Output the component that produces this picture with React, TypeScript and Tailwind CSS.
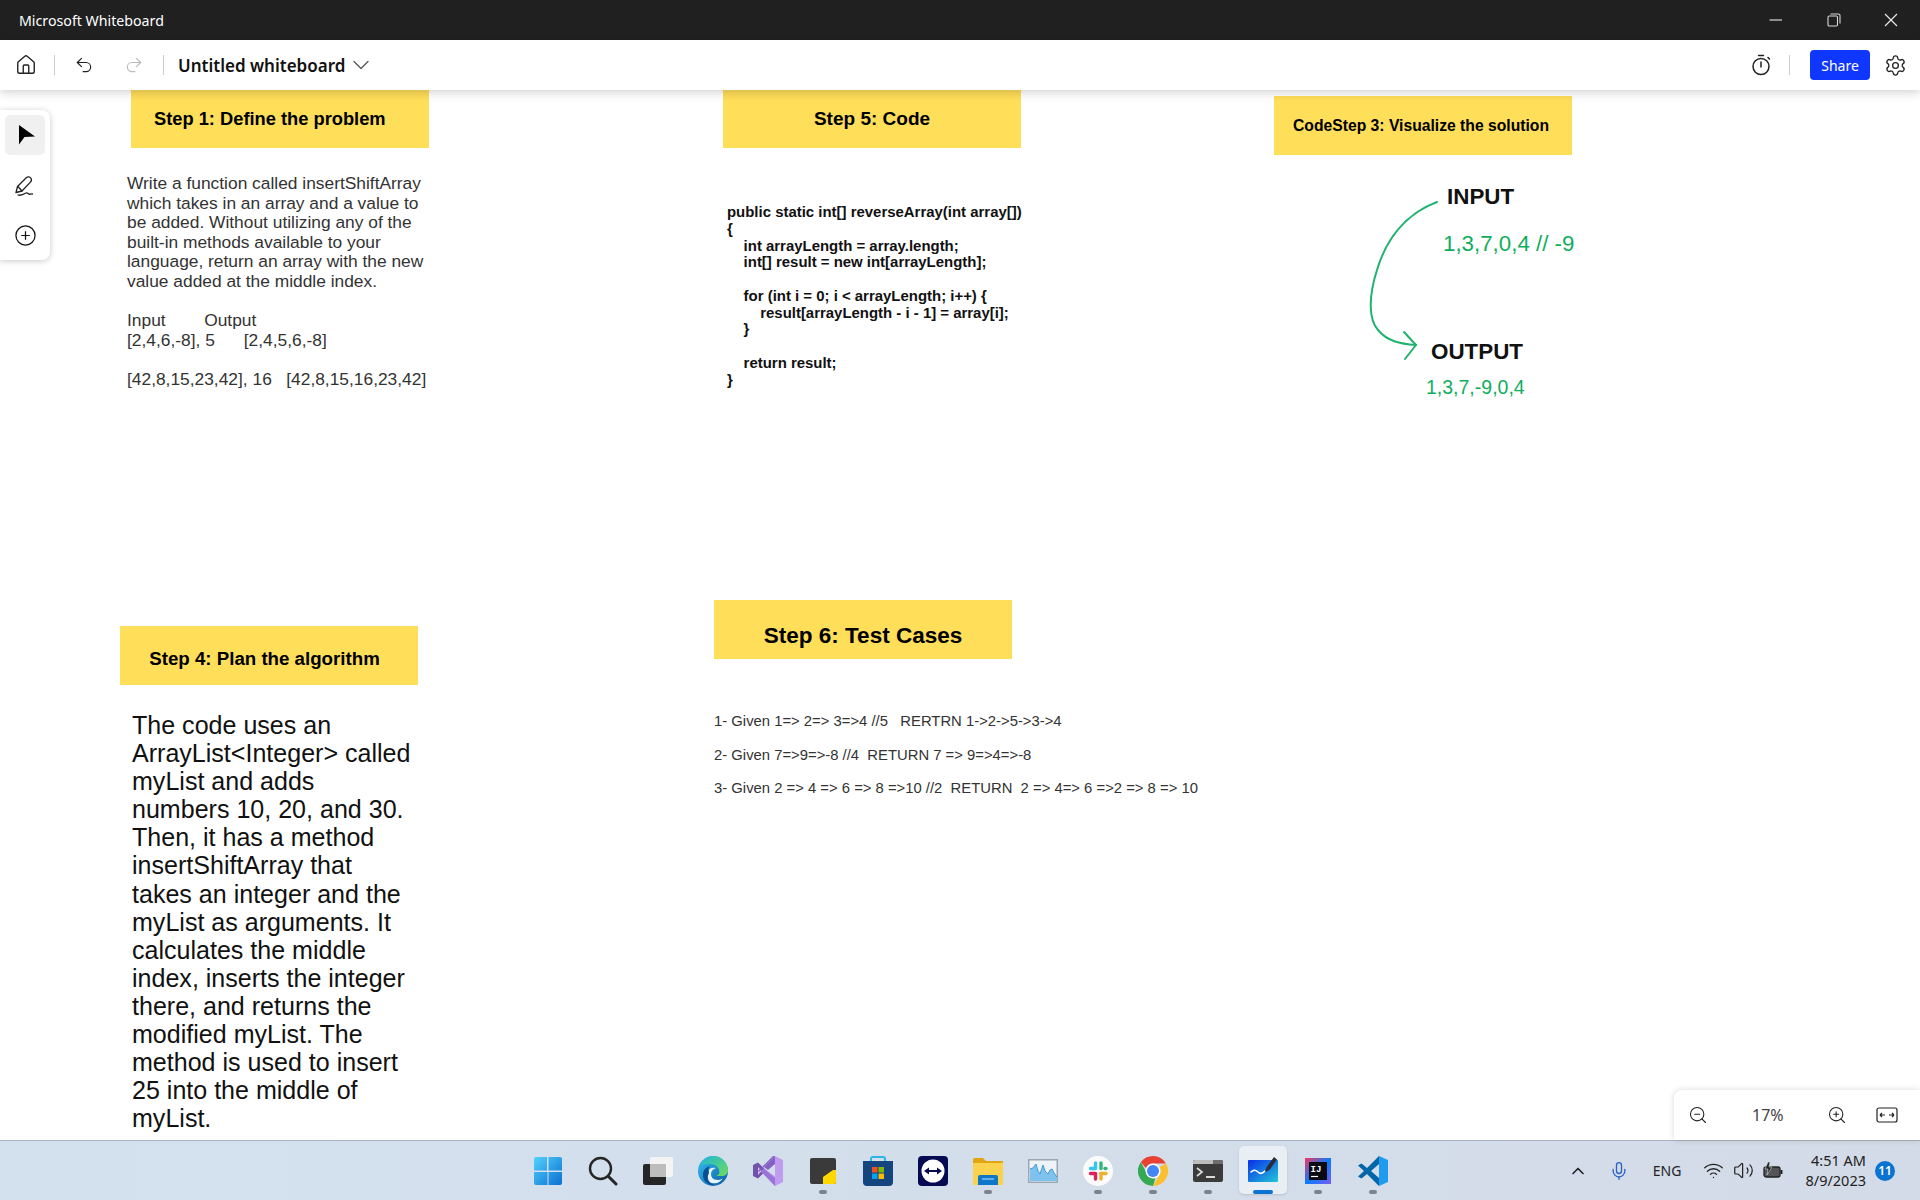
import React, { ReactNode } from 'react';
import { ChevronDown, ChevronUp, CirclePlus, Home, Mic, Redo2, Settings, Undo2, Volume2, Wifi, ZoomIn, ZoomOut } from 'lucide-react';

const arial = 'font-["Liberation_Sans",Arial,sans-serif]';
const segoe = 'font-["Noto_Sans",sans-serif]';

function Timer() {
  return (
    <svg width="20" height="22" viewBox="0 0 20 22" fill="none" stroke="#222" strokeWidth="1.5" strokeLinecap="round">
      <circle cx="10" cy="12.5" r="8" />
      <path d="M10 8v5M7.5 1.5h5M17 3.5l1.5 1.5" />
    </svg>
  );
}

function Cursor() {
  return (
    <svg width="18" height="22" viewBox="0 0 18 22">
      <path d="M1 1l16 11.500-10.500.5L1 20.500z" fill="#000" />
    </svg>
  );
}

function Pen() {
  return (
    <svg width="22" height="22" viewBox="0 0 22 22" fill="none" stroke="#222" strokeWidth="1.3" strokeLinecap="round" strokeLinejoin="round">
      <path d="M2 17.5l1.5-6L12.5 2.5c1.4-1.2 3.4-.8 4.3.5.9 1.3.7 3-.4 4.1L8 16l-6 1.5z" />
      <path d="M4 11.5l4 4.5" />
      <path d="M4 20c3 1 5.5-.5 8-2 1.5-.9 2 .9 3 1.2 1.2.3 2-.4 3.5-.2" />
    </svg>
  );
}

function WindowButtons() {
  return (
    <div className="flex items-center text-white">
      <svg width="14" height="14" viewBox="0 0 14 14" className="mr-[44px]">
        <path d="M0.5 7h12.5" stroke="#bdbdbd" strokeWidth="1.4" />
      </svg>
      <svg width="14" height="14" viewBox="0 0 14 14" fill="none" stroke="#d8d8d8" strokeWidth="1.1" className="mr-[43px]">
        <rect x="1" y="3" width="9.5" height="10" rx="1.2" />
        <path d="M3.5 1h8a1.5 1.5 0 0 1 1.5 1.5v8" />
      </svg>
      <svg width="14" height="14" viewBox="0 0 14 14" stroke="#e8e8e8" strokeWidth="1.2" className="mr-[22px]">
        <path d="M1 1l12 12M13 1L1 13" />
      </svg>
    </div>
  );
}

function Note({ className, children }: { className: string; children: ReactNode }) {
  return (
    <div className={`absolute flex h-[58px] w-[298px] items-center bg-[#ffde59] text-black font-bold ${arial} ${className}`}>
      {children}
    </div>
  );
}

function WindowsLogo() {
  return (
    <svg width="30" height="30" viewBox="0 0 30 30">
      <defs>
        <linearGradient id="win" x1="0" y1="0" x2="1" y2="1">
          <stop offset="0" stopColor="#52d2fb" />
          <stop offset="1" stopColor="#0b6fd1" />
        </linearGradient>
      </defs>
      <path d="M1 3a2 2 0 0 1 2-2h11v13.5H1zM15.5 1H27a2 2 0 0 1 2 2v11.5H15.5zM1 16h13.5v13H3a2 2 0 0 1-2-2zM15.5 16H29v11a2 2 0 0 1-2 2H15.5z" fill="url(#win)" />
    </svg>
  );
}

function SearchGlyph() {
  return (
    <svg width="30" height="30" viewBox="0 0 30 30" fill="none" stroke="#262626" strokeWidth="2.4" strokeLinecap="round">
      <circle cx="12.5" cy="12.5" r="10.5" />
      <path d="M20.5 20.5l7.5 7.5" strokeWidth="3" />
    </svg>
  );
}

function TaskView() {
  return (
    <svg width="30" height="30" viewBox="0 0 30 30">
      <rect x="0" y="8" width="23" height="21" rx="2" fill="#262626" />
      <rect x="7" y="1" width="23" height="20" rx="2" fill="#f4f4f4" />
      <rect x="7" y="8" width="16" height="13" fill="#bdbdbd" />
    </svg>
  );
}

function Edge() {
  return (
    <svg width="30" height="30" viewBox="0 0 30 30">
      <defs>
        <linearGradient id="edgeA" x1="0" y1="0" x2="1" y2="1">
          <stop offset="0" stopColor="#35c1f1" />
          <stop offset="1" stopColor="#0c59a4" />
        </linearGradient>
        <linearGradient id="edgeB" x1="0" y1="0" x2="1" y2="1">
          <stop offset="0" stopColor="#1fb7d8" />
          <stop offset="1" stopColor="#6fdc5a" />
        </linearGradient>
      </defs>
      <circle cx="15" cy="15" r="15" fill="url(#edgeA)" />
      <path d="M3 9C6 2 12 0 15 0c9 0 15 7 15 14 0 4-3 6-6 6h-6c3-1 4-3 3-6-1-4-5-6-9-6-4 0-7 1-9 1z" fill="url(#edgeB)" />
      <path d="M14 27c-5-1-7-6-5-11 2-4 6-5 9-4-3 1-5 3-5 6 0 3 2 6 7 6 2 0 4-1 5-2-2 4-6 6-11 5z" fill="#e6f4fb" />
      <path d="M11 17c-3 5 0 11 6 12-7 1-12-4-12-10 0-5 3-8 7-9-2 2-1 5-1 7z" fill="#0a4f92" />
    </svg>
  );
}

function VisualStudio() {
  return (
    <svg width="30" height="30" viewBox="0 0 30 30">
      <path d="M0 9l5-2.5 8 8-8 8L0 20z" fill="#7252aa" />
      <path d="M5 11v8l3.5-4z" fill="#d8c5f5" />
      <path d="M22 0l8 4v22l-8 4-14-14.5 3-3 11 8z" fill="#c09cf0" />
      <path d="M22 0L6 16l-1-1L20 0z" fill="#8661c5" />
      <path d="M22 0v8l-7 6-4-3z" fill="#8661c5" />
      <path d="M8 15.5l14 14.5v-8l-11-9.5z" fill="#9a74d8" />
    </svg>
  );
}

function Sticky() {
  return (
    <svg width="28" height="28" viewBox="0 0 28 28">
      <rect x="1" y="1" width="26" height="26" rx="2" fill="#3a3a3a" />
      <path d="M14 27V20l10-7h3v12a2 2 0 0 1-2 2z" fill="#ffd800" />
    </svg>
  );
}

function Store() {
  return (
    <svg width="30" height="30" viewBox="0 0 30 30">
      <path d="M8 6V3a2 2 0 0 1 2-2h10a2 2 0 0 1 2 2v3" fill="none" stroke="#2bb5e8" strokeWidth="2" />
      <path d="M0 5h30v21a4 4 0 0 1-4 4H4a4 4 0 0 1-4-4z" fill="#14457f" />
      <rect x="9" y="11" width="5.5" height="5.5" fill="#f25022" />
      <rect x="15.5" y="11" width="5.5" height="5.5" fill="#7fba00" />
      <rect x="9" y="17.5" width="5.5" height="5.5" fill="#00a4ef" />
      <rect x="15.5" y="17.5" width="5.5" height="5.5" fill="#ffb900" />
    </svg>
  );
}

function TeamViewer() {
  return (
    <svg width="30" height="30" viewBox="0 0 30 30">
      <rect width="30" height="30" rx="4" fill="#050a52" />
      <circle cx="15" cy="15" r="11.5" fill="#fff" />
      <path d="M6 15l5-3.5v2.4h8v-2.4l5 3.5-5 3.5v-2.4h-8v2.4z" fill="#050a52" />
    </svg>
  );
}

function Folder() {
  return (
    <svg width="30" height="28" viewBox="0 0 30 28">
      <path d="M0 3a2 2 0 0 1 2-2h8l3 3h17v5H0z" fill="#e0a50f" />
      <path d="M0 6h30v22H0z" fill="#fbd24d" />
      <path d="M5 20a2 2 0 0 1 2-2h16a2 2 0 0 1 2 2v8H5z" fill="#0d78c9" />
      <path d="M9 22h12" stroke="#bfe3fa" strokeWidth="1" />
    </svg>
  );
}

function Monitor() {
  return (
    <svg width="30" height="24" viewBox="0 0 30 24">
      <rect x="0.75" y="0.75" width="28.5" height="22.5" fill="#eef3f8" stroke="#9aa6b2" strokeWidth="1.5" />
      <path d="M2 22V10l3-1 3-4 2 7 2 3 3-9 2 6 3 3 2-4 2-1 2 4 3 4v4z" fill="#7ec3ee" />
      <path d="M2 10l3-1 3-4 2 7 2 3 3-9 2 6 3 3 2-4 2-1 2 4 3 4" fill="none" stroke="#3f9ad9" strokeWidth="1" />
    </svg>
  );
}

function Slack() {
  return (
    <svg width="30" height="30" viewBox="0 0 30 30">
      <circle cx="15" cy="15" r="15" fill="#fbfbfb" />
      <g strokeWidth="3.4" strokeLinecap="round" fill="none">
        <path d="M12.5 7v5.5M7.5 12.5h5" stroke="#36c5f0" />
        <path d="M18 7v5.5" stroke="#2eb67d" />
        <path d="M23 12.5h-1" stroke="#2eb67d" />
        <path d="M17.5 17.5h5.5M18 18v5" stroke="#ecb22e" />
        <path d="M12.5 17.5v5.5M7.5 17.5h5" stroke="#e01e5a" />
      </g>
    </svg>
  );
}

function Chrome() {
  return (
    <svg width="30" height="30" viewBox="0 0 30 30">
      <path d="M15 0a15 15 0 0 1 13 7.5H15a7.5 7.5 0 0 0-7 4.7L2.800 6.300A15 15 0 0 1 15 0z" fill="#e94235" />
      <path d="M28 7.500A15 15 0 0 1 15 30l6.500-11.200A7.500 7.500 0 0 0 21.500 11z" fill="#fbc02d" />
      <path d="M15 30A15 15 0 0 1 2.800 6.300L9 17.500a7.500 7.500 0 0 0 8.500 4.500z" fill="#34a853" />
      <circle cx="15" cy="15" r="7.500" fill="#fff" />
      <circle cx="15" cy="15" r="6" fill="#4285f4" />
    </svg>
  );
}

function Terminal() {
  return (
    <svg width="30" height="22" viewBox="0 0 30 22">
      <rect width="30" height="22" rx="2" fill="#3b3b3b" />
      <path d="M2 0h18v4H0V2a2 2 0 0 1 2-2z" fill="#bdbdbd" />
      <path d="M20 0h8a2 2 0 0 1 2 2v2H20z" fill="#6e6e6e" />
      <path d="M4 8l5 4-5 4" fill="none" stroke="#d9d9d9" strokeWidth="1.8" />
      <path d="M13 17h9" stroke="#d9d9d9" strokeWidth="2" />
    </svg>
  );
}

function WhiteboardApp() {
  return (
    <svg width="30" height="30" viewBox="0 0 30 30">
      <defs>
        <linearGradient id="wb" x1="0" y1="0" x2="1" y2="1">
          <stop offset="0" stopColor="#0a2ee8" />
          <stop offset="1" stopColor="#22c7d8" />
        </linearGradient>
      </defs>
      <rect x="0" y="4" width="30" height="22" rx="1" fill="url(#wb)" />
      <path d="M3 16c3-3 5-2 7 0s4 2 7-1" fill="none" stroke="#fff" strokeWidth="1.6" strokeLinecap="round" />
      <path d="M18 12L26 1l3 2.500-7.500 10.500z" fill="#2b2b38" />
      <path d="M17 16l1-4 3.500 2z" fill="#2b2b38" />
    </svg>
  );
}

function Idea() {
  return (
    <svg width="26" height="26" viewBox="0 0 26 26">
      <defs>
        <linearGradient id="ij" x1="0" y1="0" x2="1" y2="1">
          <stop offset="0" stopColor="#fe315d" />
          <stop offset="0.5" stopColor="#087cfa" />
          <stop offset="1" stopColor="#7a5cf5" />
        </linearGradient>
      </defs>
      <rect width="26" height="26" fill="url(#ij)" />
      <rect x="4" y="4" width="18" height="18" fill="#0a0a12" />
      <text x="5.500" y="13.500" fontSize="9" fontWeight="700" fill="#fff" fontFamily="Liberation Mono, monospace">IJ</text>
      <path d="M6 18.500h7" stroke="#fff" strokeWidth="1.2" />
    </svg>
  );
}

function VsCode() {
  return (
    <svg width="30" height="30" viewBox="0 0 30 30">
      <path d="M21 0l9 4v22l-9 4V0z" fill="#1f9cf0" />
      <path d="M21 0L9 12 3.500 7.500 0 9.500 6 15l-6 5.500 3.500 2L9 18l12 12v-8l-8-7 8-7z" fill="#0065a9" />
    </svg>
  );
}

const apps: { icon: ReactNode; pill?: boolean; active?: boolean }[] = [
  { icon: <WindowsLogo /> },
  { icon: <SearchGlyph /> },
  { icon: <TaskView /> },
  { icon: <Edge /> },
  { icon: <VisualStudio /> },
  { icon: <Sticky />, pill: true },
  { icon: <Store /> },
  { icon: <TeamViewer /> },
  { icon: <Folder />, pill: true },
  { icon: <Monitor /> },
  { icon: <Slack />, pill: true },
  { icon: <Chrome />, pill: true },
  { icon: <Terminal />, pill: true },
  { icon: <WhiteboardApp />, active: true },
  { icon: <Idea />, pill: true },
  { icon: <VsCode />, pill: true },
];

export default function App() {
  return (
    <div className="flex h-[1200px] w-[1920px] flex-col overflow-hidden bg-white">
      {/* title bar */}
      <div className={`flex h-[40px] shrink-0 items-center justify-between bg-[#202020] pl-[19px] text-[14.2px] text-white ${segoe}`}>
        <span className="pt-[1px]">Microsoft Whiteboard</span>
        <WindowButtons />
      </div>

      {/* toolbar */}
      <div className={`relative z-10 flex h-[50px] shrink-0 items-center bg-white pl-[15px] pr-[13px] shadow-[0_2px_10px_rgba(0,0,0,0.2)] ${segoe}`}>
        <Home size={22} strokeWidth={1.5} className="text-[#222]" />
        <div className="ml-[17px] h-[20px] w-px bg-[#ccc]" />
        <Undo2 size={20} strokeWidth={1.4} className="ml-[19px] text-[#222]" />
        <Redo2 size={20} strokeWidth={1.4} className="ml-[30px] text-[#bbb]" />
        <div className="ml-[19px] h-[20px] w-px bg-[#ccc]" />
        <span className="ml-[14px] pt-[1px] text-[17px] font-semibold text-[#111]">Untitled whiteboard</span>
        <ChevronDown size={28} strokeWidth={1.1} className="ml-[2px] text-[#555]" />
        <div className="flex-1" />
        <Timer />
        <div className="ml-[18px] h-[20px] w-px bg-[#ccc]" />
        <button className="ml-[20px] flex h-[30px] w-[60px] items-center justify-center rounded-[4px] bg-[#0f37ff] text-[14px] text-white">
          Share
        </button>
        <Settings size={23} strokeWidth={1.4} className="ml-[14px] text-[#222]" />
      </div>

      {/* canvas */}
      <div className="relative flex-1 bg-white text-[#333]">
        <div className="absolute left-0 top-[20px] z-10 flex h-[150px] w-[50px] flex-col items-center rounded-r-[8px] bg-white pt-[5px] shadow-[0_1px_6px_rgba(0,0,0,0.22)]">
          <div className="flex h-[40px] w-[40px] items-center justify-center rounded-[5px] bg-[#f0f0f0] pl-[3px]">
            <Cursor />
          </div>
          <div className="mt-[20px]">
            <Pen />
          </div>
          <CirclePlus size={23} strokeWidth={1.3} className="mt-[27px] text-[#111]" />
        </div>

        <Note className="left-[131px] top-0 h-[57px] pb-[1px] pl-[23px] text-[18.3px]">Step 1: Define the problem</Note>
        <div className={`absolute left-[127px] top-[84px] whitespace-pre text-[17.36px] leading-[19.6px] ${arial}`}>
          {`Write a function called insertShiftArray
which takes in an array and a value to
be added. Without utilizing any of the
built-in methods available to your
language, return an array with the new
value added at the middle index.

Input        Output
[2,4,6,-8], 5      [2,4,5,6,-8]

[42,8,15,23,42], 16   [42,8,15,16,23,42]`}
        </div>

        <Note className="left-[723px] top-0 justify-center text-[19px]">Step 5: Code</Note>
        <div className={`absolute left-[727px] top-[114px] whitespace-pre text-[14.95px] font-bold leading-[16.75px] text-[#111] ${arial}`}>
          {`public static int[] reverseArray(int array[])
{
    int arrayLength = array.length;
    int[] result = new int[arrayLength];

    for (int i = 0; i < arrayLength; i++) {
        result[arrayLength - i - 1] = array[i];
    }

    return result;
}`}
        </div>

        <Note className="left-[1274px] top-[6px] h-[59px] pl-[19px] text-[15.7px]">CodeStep 3: Visualize the solution</Note>
        <span className={`absolute left-[1447px] top-[90px] text-[22.4px] font-bold text-[#111] ${arial}`}>INPUT</span>
        <span className={`absolute left-[1443px] top-[137px] text-[22.3px] text-[#0fae5e] ${arial}`}>1,3,7,0,4 // -9</span>
        <span className={`absolute left-[1431px] top-[245px] text-[22.4px] font-bold text-[#111] ${arial}`}>OUTPUT</span>
        <span className={`absolute left-[1426px] top-[283px] text-[19.5px] text-[#0fae5e] ${arial}`}>1,3,7,-9,0,4</span>
        <svg className="absolute left-[1360px] top-[100px]" width="90" height="180" viewBox="1360 190 90 180" fill="none" stroke="#1fb36f" strokeWidth="2" strokeLinecap="round" strokeLinejoin="round">
          <path d="M1437 202C1405 214 1386 240 1377 270C1368 298 1369 320 1378 330C1387 341 1400 344 1416 345" />
          <path d="M1404 332L1416 345L1405 359" />
        </svg>

        <Note className="left-[120px] top-[536px] h-[59px] justify-center pr-[9px] pt-[7px] text-[18.7px]">Step 4: Plan the algorithm</Note>
        <div className={`absolute left-[132px] top-[621px] whitespace-pre text-[25.05px] leading-[28.1px] text-[#111] ${arial}`}>
          {`The code uses an
ArrayList<Integer> called
myList and adds
numbers 10, 20, and 30.
Then, it has a method
insertShiftArray that
takes an integer and the
myList as arguments. It
calculates the middle
index, inserts the integer
there, and returns the
modified myList. The
method is used to insert
25 into the middle of
myList.`}
        </div>

        <Note className="left-[714px] top-[510px] h-[59px] justify-center pt-[12px] text-[22.5px]">Step 6: Test Cases</Note>
        <div className={`absolute left-[714px] top-[623px] flex flex-col gap-[16.500px] whitespace-pre text-[14.84px] leading-[17px] ${arial}`}>
          <span>1- Given 1=&gt; 2=&gt; 3=&gt;4 //5   RERTRN 1-&gt;2-&gt;5-&gt;3-&gt;4</span>
          <span>2- Given 7=&gt;9=&gt;-8 //4  RETURN 7 =&gt; 9=&gt;4=&gt;-8</span>
          <span>3- Given 2 =&gt; 4 =&gt; 6 =&gt; 8 =&gt;10 //2  RETURN  2 =&gt; 4=&gt; 6 =&gt;2 =&gt; 8 =&gt; 10</span>
        </div>

        {/* zoom control */}
        <div className={`absolute bottom-0 right-0 flex h-[50px] w-[246px] items-center rounded-tl-[8px] bg-white pl-[14px] text-[#222] shadow-[0_0_6px_rgba(0,0,0,0.15)] ${segoe}`}>
          <ZoomOut size={20} strokeWidth={1.3} />
          <span className="ml-[44px] text-[16px] text-[#444]">17%</span>
          <ZoomIn size={20} strokeWidth={1.3} className="ml-[43px]" />
          <svg width="22" height="16" viewBox="0 0 22 16" fill="none" stroke="#222" strokeWidth="1.2" className="ml-[29px]">
            <rect x="1" y="1" width="20" height="14" rx="2" />
            <path d="M4 8h5M4 8l2-2M4 8l2 2M18 8h-5M18 8l-2-2M18 8l-2 2" />
          </svg>
        </div>
      </div>

      {/* taskbar */}
      <div className={`flex h-[60px] shrink-0 items-center border-t border-[#aab5c2] bg-gradient-to-r from-[#d3e1ee] to-[#d4dbe8] ${segoe}`}>
        <div className="flex-1" />
        <div className="flex h-full items-center">
          {apps.map((app, i) => (
            <div key={i} className="relative flex h-full w-[55px] items-center justify-center">
              {app.active && <div className="absolute left-[4px] top-[5px] h-[48px] w-[48px] rounded-[5px] bg-white/50 shadow-sm" />}
              <div className="relative">{app.icon}</div>
              {app.pill && <div className="absolute bottom-[6px] left-[24px] h-[4px] w-[8px] rounded-full bg-[#7b838c]" />}
              {app.active && <div className="absolute bottom-[6px] left-[18px] h-[4px] w-[20px] rounded-full bg-[#0a74d0]" />}
            </div>
          ))}
        </div>
        <div className="flex-1">
          <div className="flex items-center justify-end text-[#222]">
            <ChevronUp size={20} strokeWidth={2} />
            <Mic size={20} strokeWidth={1.6} className="ml-[21px] text-[#2a62c8]" />
            <span className="ml-[24px] text-[14px]">ENG</span>
            <Wifi size={21} strokeWidth={1.5} className="ml-[22px]" />
            <Volume2 size={21} strokeWidth={1.4} className="ml-[9px]" />
            <svg width="20" height="20" viewBox="0 0 20 20" className="ml-[9px]">
              <rect x="1" y="6" width="16" height="10" rx="2" fill="#555" stroke="#222" strokeWidth="1.3" />
              <rect x="17.500" y="9" width="2" height="4" fill="#222" />
              <path d="M5 1L2 8h3l-1 6 5-8H6l1-5z" fill="#222" stroke="#d4dbe8" strokeWidth="0.6" />
            </svg>
            <div className="ml-[22px] flex flex-col items-end pb-[2px] text-[14.5px] leading-[20px]">
              <span>4:51 AM</span>
              <span>8/9/2023</span>
            </div>
            <div className="ml-[9px] mr-[25px] flex h-[20px] w-[20px] items-center justify-center rounded-full bg-[#0a74d0] text-[12px] font-semibold text-white">
              11
            </div>
          </div>
        </div>
      </div>
    </div>
  );
}
